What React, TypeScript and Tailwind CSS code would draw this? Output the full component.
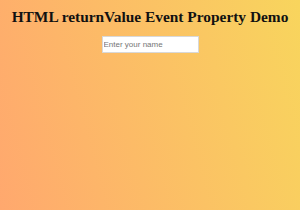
import React from "react";

export default function App() {
  return (
    <div className="w-[300px] h-[210px] overflow-hidden bg-[linear-gradient(75deg,#ffa86e,#f8d55d)] flex flex-col items-center">
      <h1 className="mt-[8px] text-[15.4px] leading-[18px] font-bold text-[#111] whitespace-nowrap font-['Liberation_Serif',serif]">
        HTML returnValue Event Property Demo
      </h1>
      <input
        type="text"
        placeholder="Enter your name"
        className="mt-[10px] w-[97px] h-[17px] bg-white border border-[#d8d8d8] px-[1px] text-[8px] text-[#333] placeholder:text-[#757575] outline-none font-['Liberation_Sans',Arial,sans-serif]"
      />
    </div>
  );
}
